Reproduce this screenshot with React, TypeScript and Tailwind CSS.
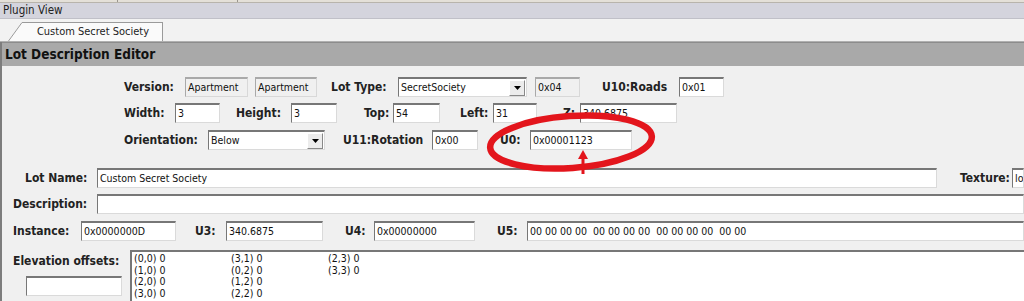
import React from 'react';

const font = { fontFamily: '"DejaVu Sans Condensed", "DejaVu Sans", Verdana, sans-serif', fontStretch: 'condensed' };

const Label: React.FC<{ text: string; className?: string }> = ({ text, className = '' }) => (
  <span className={`font-bold text-[12px] text-[#222] whitespace-nowrap ${className}`}>{text}</span>
);

const Field: React.FC<{ value?: string; className?: string; readOnly?: boolean }> = ({
  value = '',
  className = '',
  readOnly = false,
}) => (
  <div
    className={`h-[20px] flex items-center pl-[2px] text-[10.5px] text-[#111] whitespace-pre overflow-hidden border-t-2 border-l border-r border-b ${
      readOnly
        ? 'bg-[#f0f0f0] border-t-[#a9a9a9] border-l-[#a9a9a9] border-r-[#d8d8d8] border-b-[#d8d8d8]'
        : 'bg-white border-t-[#777] border-l-[#777] border-r-[#dadada] border-b-[#dadada]'
    } ${className}`}
  >
    {value}
  </div>
);

const Select: React.FC<{ value: string; className?: string }> = ({ value, className = '' }) => (
  <div
    className={`h-[20px] flex items-center bg-white border-t-2 border-l border-r border-b border-t-[#777] border-l-[#777] border-r-[#dadada] border-b-[#dadada] ${className}`}
  >
    <span className="flex-1 pl-[2px] text-[10.5px] text-[#111] whitespace-nowrap overflow-hidden">{value}</span>
    <div className="w-[16px] h-[16px] mr-[1px] flex items-center justify-center bg-[#ececec] border border-t-white border-l-white border-r-[#888] border-b-[#888]">
      <svg width="7" height="4" viewBox="0 0 7 4">
        <path d="M0 0h7L3.5 4z" fill="#000" />
      </svg>
    </div>
  </div>
);

const elevation = [
  ['(0,0) 0', '(1,0) 0', '(2,0) 0', '(3,0) 0'],
  ['(3,1) 0', '(0,2) 0', '(1,2) 0', '(2,2) 0'],
  ['(2,3) 0', '(3,3) 0'],
];

export default function App() {
  return (
    <div className="relative w-[1024px] h-[301px] overflow-hidden bg-[#f0f0f0]" style={font}>
      {/* window top strip */}
      <div className="h-[3px] flex bg-[#e4e0d8] border-b border-[#b8b4ac]">
        <div className="w-[118px] border-r border-[#9a968e]" />
        <div className="w-[120px] border-r border-[#9a968e]" />
      </div>

      {/* Plugin View title */}
      <div className="h-[16px] flex items-center pl-[3px] bg-[#d4d4dd] border-b border-[#c0c0c8] text-[11.5px] text-[#222]">
        Plugin View
      </div>

      {/* tab strip */}
      <div className="h-[23px] flex items-end bg-[#f2f2f2] border-b border-[#b0b0b0]">
        <div className="ml-[8px] flex items-end h-[19px]">
          <svg width="14" height="19" viewBox="0 0 14 19" className="block">
            <path d="M0 19 L14 0 V19 Z" fill="#fafafa" />
            <path d="M0.5 19 L14 0.5" stroke="#9a9a9a" strokeWidth="1" fill="none" />
          </svg>
          <div className="h-[19px] w-[141px] bg-[#fafafa] border-t border-r border-[#9a9a9a] flex items-center justify-center pl-[2px] text-[11px] text-[#222]">
            Custom Secret Society
          </div>
        </div>
      </div>

      {/* editor panel */}
      <div className="border-l-2 border-[#7d7d7d] h-full">
        <div className="h-[24px] flex items-center pl-[3px] bg-[#a9a9a9] border-t border-[#8c8c8c]">
          <span className="font-bold text-[13.5px] text-[#111]">Lot Description Editor</span>
        </div>

        {/* row 1 */}
        <div className="flex items-center mt-[11px] pl-[122px]">
          <Label text="Version:" className="w-[61px]" />
          <Field value="Apartment" readOnly className="w-[63px]" />
          <Field value="Apartment" readOnly className="w-[62px] ml-[7px]" />
          <Label text="Lot Type:" className="w-[67px] ml-[14px]" />
          <Select value="SecretSociety" className="w-[129px]" />
          <Field value="0x04" readOnly className="w-[45px] ml-[8px]" />
          <Label text="U10:Roads" className="w-[77px] ml-[22px]" />
          <Field value="0x01" className="w-[45px]" />
        </div>

        {/* row 2 */}
        <div className="flex items-center mt-[6px] pl-[122px]">
          <Label text="Width:" className="w-[51px]" />
          <Field value="3" className="w-[45px]" />
          <Label text="Height:" className="w-[55px] ml-[16px]" />
          <Field value="3" className="w-[46px]" />
          <Label text="Top:" className="w-[29px] ml-[27px]" />
          <Field value="54" className="w-[47px]" />
          <Label text="Left:" className="w-[33px] ml-[20px]" />
          <Field value="31" className="w-[44px]" />
          <Label text="Z:" className="w-[17px] ml-[26px]" />
          <Field value="340.6875" className="w-[97px]" />
        </div>

        {/* row 3 */}
        <div className="flex items-center mt-[7px] pl-[122px]">
          <Label text="Orientation:" className="w-[84px]" />
          <Select value="Below" className="w-[117px]" />
          <Label text="U11:Rotation" className="w-[89px] ml-[18px]" />
          <Field value="0x00" className="w-[46px]" />
          <Label text="U0:" className="w-[30px] ml-[22px]" />
          <Field value="0x00001123" className="w-[102px]" />
        </div>

        {/* lot name */}
        <div className="flex items-center mt-[18px]">
          <Label text="Lot Name:" className="w-[95px] pl-[23px]" />
          <Field value="Custom Secret Society" className="w-[840px]" />
          <Label text="Texture:" className="w-[52px] ml-[23px]" />
          <Field value="lo" className="flex-1" />
        </div>

        {/* description */}
        <div className="flex items-center mt-[6px]">
          <Label text="Description:" className="w-[95px] pl-[11px]" />
          <Field className="flex-1" />
        </div>

        {/* instance row */}
        <div className="flex items-center mt-[7px] pl-[11px]">
          <Label text="Instance:" className="w-[68px]" />
          <Field value="0x0000000D" className="w-[95px]" />
          <Label text="U3:" className="w-[31px] ml-[19px]" />
          <Field value="340.6875" className="w-[97px]" />
          <Label text="U4:" className="w-[29px] ml-[22px]" />
          <Field value="0x00000000" className="w-[101px]" />
          <Label text="U5:" className="w-[30px] ml-[22px]" />
          <Field value="00 00 00 00  00 00 00 00  00 00 00 00  00 00" className="flex-1" />
        </div>

        {/* elevation offsets */}
        <div className="flex mt-[9px]">
          <div className="w-[128px] flex flex-col pl-[11px]">
            <Label text="Elevation offsets:" className="mt-[2px]" />
            <Field className="w-[96px] ml-[13px] mt-[6px]" />
          </div>
          <div className="flex-1 h-[60px] bg-white border-t-2 border-l-2 border-t-[#777] border-l-[#777] flex pl-[2px] pt-[1px]">
            {elevation.map((col, i) => (
              <div key={i} className="w-[97px] flex flex-col text-[10.5px] leading-[11.7px] text-[#111]">
                {col.map((c) => (
                  <span key={c}>{c}</span>
                ))}
              </div>
            ))}
          </div>
        </div>
      </div>

      {/* red annotation ellipse + arrow */}
      <svg className="absolute left-[480px] top-[105px] pointer-events-none" width="184" height="72" viewBox="0 0 184 72">
        <ellipse cx="91" cy="37" rx="81" ry="26" fill="none" stroke="#e3151c" strokeWidth="6.5" transform="rotate(-4 91 37)" />
        <path d="M103 69 V53" stroke="#e3151c" strokeWidth="3" />
        <path d="M98 54 L103 45 L108 54 Z" fill="#e3151c" />
      </svg>
    </div>
  );
}
